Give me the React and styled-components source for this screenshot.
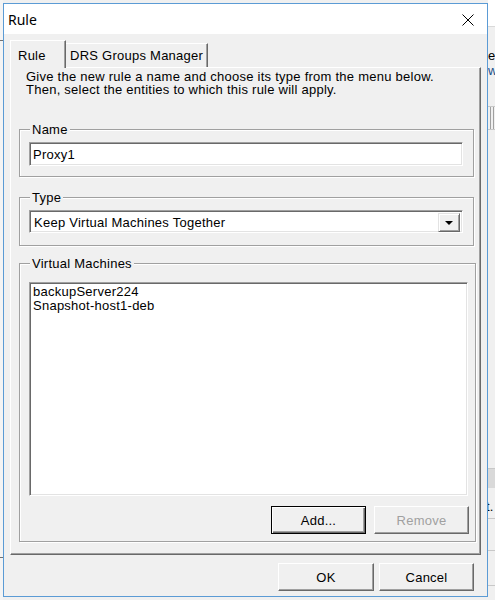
import React from "react";
import styled, { createGlobalStyle } from "styled-components";

const Global = createGlobalStyle`
  html, body { margin: 0; padding: 0; background: #f0f0f0; }
  body { font-family: "Liberation Sans", Arial, sans-serif; font-size: 13px; color: #000; letter-spacing: 0.25px; }
  * { box-sizing: border-box; }
`;

const Desktop = styled.div`
  display: flex;
  width: 495px;
  height: 600px;
  overflow: hidden;
  background: #f0f0f0;
`;

const LeftStrip = styled.div`
  flex: none;
  width: 3px;
  display: flex;
  flex-direction: column;
  background: #f4f4f4;
`;

const Tick = styled.div`
  height: 1px;
  margin-top: ${(p) => p.$top}px;
  background: #707070;
`;

const Window = styled.div`
  flex: none;
  width: 485px;
  height: 594px;
  margin-top: 3px;
  border: 1px solid #5b9bd5;
  display: flex;
  flex-direction: column;
  background: #f0f0f0;
`;

const TitleBar = styled.div`
  height: 30px;
  flex: none;
  background: #fff;
  display: flex;
  align-items: center;
  justify-content: space-between;
  padding-left: 4px;
`;

const Title = styled.span`
  font-family: "Noto Sans", "Liberation Sans", sans-serif;
  font-size: 14px;
  letter-spacing: 0;
  margin-top: 1px;
`;

const CloseIcon = styled.svg`
  width: 12px;
  height: 12px;
  margin-right: 13px;
  margin-top: 2px;
`;

const Body = styled.div`
  flex: 1;
  display: flex;
  flex-direction: column;
  padding: 6px 5px 4px 6px;
`;

const TabStrip = styled.div`
  display: flex;
  align-items: flex-end;
  height: 28px;
  margin-bottom: -1px;
  position: relative;
  z-index: 1;
`;

const Tab = styled.div`
  display: flex;
  align-items: center;
  width: ${(p) => p.$w}px;
  padding-left: ${(p) => p.$pl}px;
  height: ${(p) => (p.$active ? 28 : 24)}px;
  margin-bottom: ${(p) => (p.$active ? 0 : 1)}px;
  padding-top: ${(p) => (p.$active ? 2 : 0)}px;
  background: #f0f0f0;
  border-top: 1px solid #fff;
  border-left: ${(p) => (p.$active ? "1px solid #fff" : "none")};
  border-right: 1px solid #696969;
  box-shadow: inset -1px 0 #a0a0a0;
  white-space: nowrap;
`;

const Panel = styled.div`
  width: 471px;
  height: 488px;
  flex: none;
  border-top: 1px solid #fff;
  border-left: 1px solid #fff;
  border-right: 1px solid #696969;
  border-bottom: 1px solid #696969;
  box-shadow: inset -1px -1px #a0a0a0;
  display: flex;
  flex-direction: column;
  padding-top: 2px;
`;

const Intro = styled.div`
  padding-left: 15px;
  display: flex;
  flex-direction: column;
`;

const IntroLine = styled.span`
  line-height: 13px;
  height: 13px;
  white-space: nowrap;
`;

const Group = styled.fieldset`
  margin: ${(p) => p.$mt}px 0 0 8px;
  width: ${(p) => p.$w}px;
  padding: ${(p) => p.$pt}px ${(p) => p.$pr || 9}px ${(p) => p.$pb}px 9px;
  border: 1px solid #a0a0a0;
  box-shadow: inset 1px 1px #fff, 1px 1px #fff;
  min-width: 0;
  display: flex;
  flex-direction: column;
`;

const Legend = styled.legend`
  padding: 0 2px;
  margin-left: 1px;
  line-height: 15px;
  background: #f0f0f0;
`;

const Sunken = styled.div`
  background: #fff;
  border-top: 1px solid #a0a0a0;
  border-left: 1px solid #a0a0a0;
  border-right: 1px solid #fff;
  border-bottom: 1px solid #fff;
  box-shadow: inset 1px 1px #696969, inset -1px -1px #e3e3e3;
`;

const TextField = styled(Sunken)`
  width: ${(p) => p.$w}px;
  height: 24px;
  display: flex;
  align-items: center;
  padding-left: 3px;
`;

const Combo = styled(Sunken)`
  width: 434px;
  height: 23px;
  display: flex;
  align-items: center;
  justify-content: space-between;
  padding: 2px 2px 1px 4px;
`;

const DropButton = styled.div`
  width: 22px;
  height: 19px;
  background: #f0f0f0;
  border-top: 1px solid #e3e3e3;
  border-left: 1px solid #e3e3e3;
  border-right: 1px solid #696969;
  border-bottom: 1px solid #696969;
  box-shadow: inset 1px 1px #fff, inset -1px -1px #a0a0a0;
  display: flex;
  align-items: center;
  justify-content: center;
`;

const Arrow = styled.span`
  width: 0;
  height: 0;
  border-left: 4px solid transparent;
  border-right: 4px solid transparent;
  border-top: 4px solid #000;
  margin-top: 1px;
`;

const ListBox = styled(Sunken)`
  width: 439px;
  height: 214px;
  padding: 2px 3px;
  line-height: 14px;
`;

const ButtonRow = styled.div`
  display: flex;
  justify-content: flex-end;
  gap: ${(p) => p.$gap}px;
  margin-top: ${(p) => p.$mt}px;
  margin-right: ${(p) => p.$mr}px;
`;

const Button = styled.div`
  width: ${(p) => p.$w || 95}px;
  height: 28px;
  display: flex;
  align-items: center;
  justify-content: center;
  background: #f0f0f0;
  color: ${(p) => (p.$disabled ? "#a0a0a0" : "#000")};
  border-top: 1px solid ${(p) => (p.$default ? "#000" : "#fff")};
  border-left: 1px solid ${(p) => (p.$default ? "#000" : "#fff")};
  border-right: 1px solid ${(p) => (p.$default ? "#000" : "#696969")};
  border-bottom: 1px solid ${(p) => (p.$default ? "#000" : "#696969")};
  box-shadow: ${(p) =>
    p.$default
      ? "inset 1px 1px #fff, inset -1px -1px #696969, inset -2px -2px #a0a0a0"
      : "inset -1px -1px #a0a0a0"};
`;

const BackApp = styled.div`
  flex: none;
  width: 7px;
  display: flex;
  flex-direction: column;
  overflow: hidden;
  font-family: "Liberation Sans", Arial, sans-serif;
  font-size: 13px;
`;

const BackTop = styled.div`
  height: 27px;
  flex: none;
  background: #fff;
  border-bottom: 1px solid #d9d9d9;
`;

const BackText = styled.div`
  margin-top: ${(p) => p.$mt}px;
  line-height: 14px;
  height: 14px;
  flex: none;
  overflow: hidden;
  white-space: nowrap;
  margin-left: ${(p) => p.$ml || 0}px;
  color: ${(p) => p.$color || "#000"};
`;

const BackBox = styled.div`
  margin-top: ${(p) => p.$mt}px;
  height: ${(p) => p.$h}px;
  flex: none;
  background: ${(p) => p.$bg || "#f0f0f0"};
  border-top: 1px solid #c8c8c8;
  border-bottom: ${(p) => (p.$bb ? "1px solid #c8c8c8" : "none")};
  display: flex;
  gap: 2px;
  padding-left: 2px;
`;

const VLine = styled.div`
  width: 1px;
  background: #a0a0a0;
`;

export default function App() {
  return (
    <>
      <Global />
      <Desktop>
        <LeftStrip>
          <Tick $top={40} />
          <Tick $top={516} />
        </LeftStrip>
        <Window>
          <TitleBar>
            <Title>Rule</Title>
            <CloseIcon viewBox="0 0 12 12">
              <path d="M0.5 0.5 L11.5 11.5 M11.5 0.5 L0.5 11.5" stroke="#000" strokeWidth="1" fill="none" />
            </CloseIcon>
          </TitleBar>
          <Body>
            <TabStrip>
              <Tab $active $w={56} $pl={7}>Rule</Tab>
              <Tab $w={142} $pl={4}>DRS Groups Manager</Tab>
            </TabStrip>
            <Panel>
              <Intro>
                <IntroLine>Give the new rule a name and choose its type from the menu below.</IntroLine>
                <IntroLine>Then, select the entities to which this rule will apply.</IntroLine>
              </Intro>
              <Group $mt={26} $w={455} $pt={5} $pb={10}>
                <Legend>Name</Legend>
                <TextField $w={434}>Proxy1</TextField>
              </Group>
              <Group $mt={13} $w={455} $pt={5} $pb={12}>
                <Legend>Type</Legend>
                <Combo>
                  <span>Keep Virtual Machines Together</span>
                  <DropButton>
                    <Arrow />
                  </DropButton>
                </Combo>
              </Group>
              <Group $mt={10} $w={457} $pt={11} $pb={7} $pr={6}>
                <Legend>Virtual Machines</Legend>
                <ListBox>
                  <div>backupServer224</div>
                  <div>Snapshot-host1-deb</div>
                </ListBox>
                <ButtonRow $gap={8} $mt={10} $mr={0}>
                  <Button $default>Add...</Button>
                  <Button $disabled>Remove</Button>
                </ButtonRow>
              </Group>
            </Panel>
            <ButtonRow $gap={5} $mt={8} $mr={8}>
              <Button $w={96}>OK</Button>
              <Button>Cancel</Button>
            </ButtonRow>
          </Body>
        </Window>
        <BackApp>
          <BackTop />
          <BackText $mt={22} $ml={0}>er</BackText>
          <BackText $mt={1} $ml={0} $color="#1a4f8a">w</BackText>
          <BackBox $mt={28} $h={24} $bb>
            <VLine />
            <VLine />
          </BackBox>
          <BackBox $mt={338} $h={20} $bg="#d9d9d9" />
          <BackText $mt={12} $ml={-2}>t.</BackText>
          <BackBox $mt={4} $h={32} />
          <BackBox $mt={0} $h={36} $bb />
        </BackApp>
      </Desktop>
    </>
  );
}
